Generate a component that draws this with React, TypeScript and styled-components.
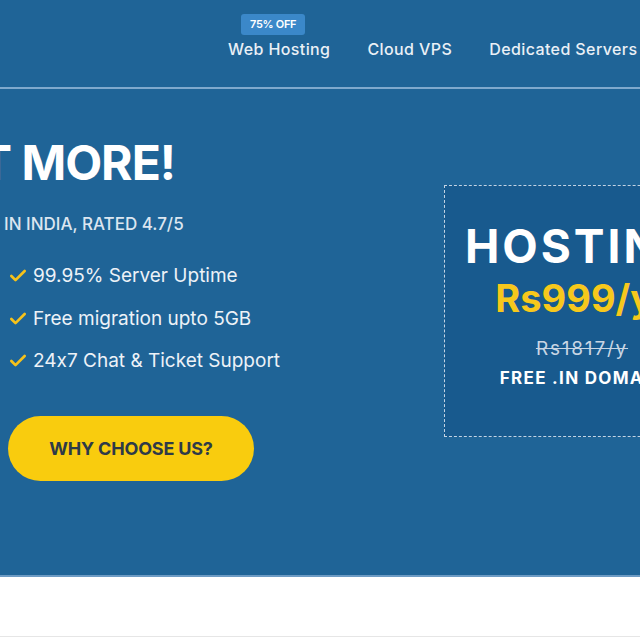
import styled, { createGlobalStyle } from "styled-components";
import { Check } from "lucide-react";

const GlobalStyle = createGlobalStyle`
  html, body {
    margin: 0;
    padding: 0;
    background: #ffffff;
    overflow: hidden;
  }
  body {
    font-family: Inter, "Open Sans", sans-serif;
    font-feature-settings: "calt" 0;
  }
`;

const Page = styled.div`
  width: 640px;
  height: 640px;
  overflow: hidden;
  display: flex;
  flex-direction: column;
`;

const Header = styled.header`
  height: 89px;
  flex-shrink: 0;
  background: #1f6497;
  border-bottom: 2px solid #7fa9cd;
  display: flex;
  align-items: center;
  padding-left: 228px;
  padding-top: 10px;
  box-sizing: border-box;
`;

const Nav = styled.nav`
  display: flex;
  gap: 37px;
  white-space: nowrap;
`;

const NavItem = styled.a`
  position: relative;
  color: #eaf0f6;
  font-size: 16px;
  font-weight: 500;
  letter-spacing: 0.4px;
  text-decoration: none;
`;

const Badge = styled.span`
  position: absolute;
  left: 13px;
  top: -25px;
  background: #3b88c9;
  color: #ffffff;
  font-size: 11px;
  font-weight: 600;
  line-height: 13px;
  padding: 4px 9px;
  border-radius: 3px;
  letter-spacing: -0.3px;
`;

const Hero = styled.section`
  height: 488px;
  flex-shrink: 0;
  background: #1f6497;
  border-bottom: 2px solid #6d9bc4;
  display: grid;
  grid-template-columns: 444px 276px;
  align-items: start;
  box-sizing: border-box;
`;

const Left = styled.div`
  padding-top: 45px;
  display: flex;
  flex-direction: column;
  align-items: flex-start;
`;

const Headline = styled.h1`
  margin: 0 0 0 -20px;
  font-size: 48px;
  line-height: 1.2;
  font-weight: 700;
  color: #ffffff;
  letter-spacing: -1px;
`;

const Subtitle = styled.p`
  margin: 22px 0 0 4px;
  font-size: 17px;
  line-height: 1.2;
  font-weight: 500;
  color: #dce6f0;
`;

const Features = styled.ul`
  list-style: none;
  margin: 30px 0 0 8px;
  padding: 0;
  display: flex;
  flex-direction: column;
  gap: 19px;
`;

const Feature = styled.li`
  display: flex;
  align-items: center;
  gap: 5px;
  font-size: 19px;
  line-height: 1.25;
  color: #edf2f7;
`;

const CTA = styled.button`
  margin: 43px 0 0 8px;
  width: 246px;
  height: 65px;
  border: none;
  border-radius: 33px;
  background: #f9cc0e;
  color: #2e3a48;
  font-family: inherit;
  font-size: 18px;
  font-weight: 700;
  letter-spacing: -0.2px;
`;

const OfferBox = styled.div`
  margin-top: 96px;
  height: 252px;
  box-sizing: border-box;
  background: #185a8e;
  border: 1px dashed #c3d4e4;
  text-align: center;
  padding-top: 33px;
  white-space: nowrap;
`;

const OfferTitle = styled.div`
  font-size: 46px;
  line-height: 1.2;
  font-weight: 700;
  color: #ffffff;
  letter-spacing: 3px;
`;

const Price = styled.div`
  margin-top: 2px;
  font-size: 38px;
  line-height: 1.2;
  font-weight: 700;
  color: #f7c81c;
`;

const OldPrice = styled.div`
  margin-top: 15px;
  font-size: 19px;
  line-height: 1.3;
  letter-spacing: 1.8px;
  color: #c8d6e4;
  text-decoration: line-through;
`;

const Perk = styled.div`
  margin-top: 6px;
  font-size: 17px;
  line-height: 1.3;
  font-weight: 700;
  letter-spacing: 1.3px;
  color: #ffffff;
`;

const Footer = styled.div`
  height: 59px;
  flex-shrink: 0;
  background: #ffffff;
  border-bottom: 1px solid #e6e6e6;
`;

const features = [
  "99.95% Server Uptime",
  "Free migration upto 5GB",
  "24x7 Chat & Ticket Support",
];

export default function App() {
  return (
    <Page>
      <GlobalStyle />
      <Header>
        <Nav>
          <NavItem>
            <Badge>75% OFF</Badge>
            Web Hosting
          </NavItem>
          <NavItem>Cloud VPS</NavItem>
          <NavItem>Dedicated Servers</NavItem>
        </Nav>
      </Header>
      <Hero>
        <Left>
          <Headline>T MORE!</Headline>
          <Subtitle>IN INDIA, RATED 4.7/5</Subtitle>
          <Features>
            {features.map((f) => (
              <Feature key={f}>
                <Check size={20} strokeWidth={3.2} color="#f6c21b" />
                {f}
              </Feature>
            ))}
          </Features>
          <CTA>WHY CHOOSE US?</CTA>
        </Left>
        <OfferBox>
          <OfferTitle>HOSTING</OfferTitle>
          <Price>Rs999/yr</Price>
          <OldPrice>Rs1817/y</OldPrice>
          <Perk>FREE .IN DOMAIN</Perk>
        </OfferBox>
      </Hero>
      <Footer />
    </Page>
  );
}
